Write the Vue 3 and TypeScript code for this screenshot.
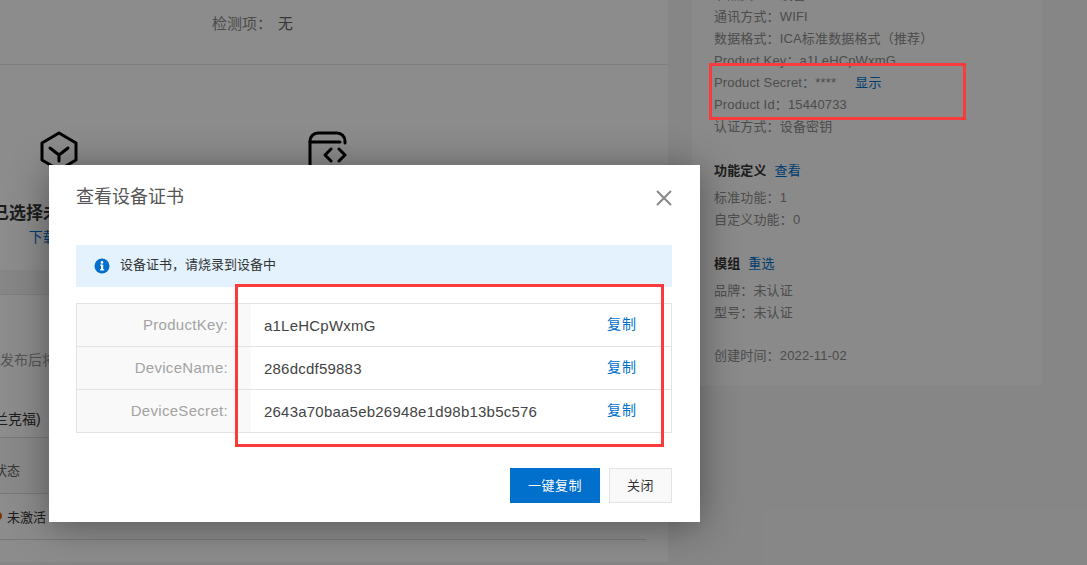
<script setup lang="ts">
interface Row { label: string; value: string }
const specs: string[] = ['通讯方式：WIFI', '数据格式：ICA标准数据格式（推荐）', 'Product Key：a1LeHCpWxmG']
const rows: Row[] = [
  { label: 'ProductKey', value: 'a1LeHCpWxmG' },
  { label: 'DeviceName', value: '286dcdf59883' },
  { label: 'DeviceSecret', value: '2643a70baa5eb26948e1d98b13b5c576' },
]
</script>

<template>
  <div class="screen">
    <div class="page">
      <main class="main">
        <div class="main-inner">
          <div class="check"><span class="check-label">检测项：</span><span class="check-value">无</span></div>
          <div class="choices">
            <div class="choice">
              <svg class="choice-icon" viewBox="0 0 40 40" fill="none" stroke="#000" stroke-width="3" stroke-linejoin="round" stroke-linecap="round">
                <path d="M20 2 37 12V29L20 39 3 29V12Z" />
                <path d="M11 17 20 24 29 17M20 24V30" />
              </svg>
              <div class="choice-title">已选择未认证模组</div>
              <div class="choice-link">下载 SDK</div>
            </div>
            <div class="choice">
              <svg class="choice-icon" viewBox="0 0 40 40" fill="none" stroke="#000" stroke-width="3" stroke-linejoin="round" stroke-linecap="round">
                <path d="M3 38V10a8 8 0 0 1 8-8H30a8 8 0 0 1 8 8V12" />
                <path d="M3 11H33M24 18 18 24 24 30M32 18 38 24 32 30" />
              </svg>
            </div>
          </div>
          <div class="band"></div>
          <div class="publish">
            <div class="publish-note">线发布后将</div>
            <div class="region">法兰克福)</div>
          </div>
          <div class="status-head">状态</div>
          <div class="status-row"><span class="dot"></span><span>未激活</span></div>
        </div>
      </main>
      <aside class="side">
        <p class="line clipped">节点类型：设备</p>
        <p v-for="s in specs" :key="s" class="line">{{ s }}</p>
        <p class="line">Product Secret：<span class="stars">****</span><a class="link show">显示</a></p>
        <p class="line">Product Id：15440733</p>
        <p class="line">认证方式：设备密钥</p>
        <h4 class="head">功能定义<a class="link">查看</a></h4>
        <p class="line">标准功能：1</p>
        <p class="line">自定义功能：0</p>
        <h4 class="head">模组<a class="link">重选</a></h4>
        <p class="line">品牌：未认证</p>
        <p class="line">型号：未认证</p>
        <p class="line created">创建时间：2022-11-02</p>
      </aside>
    </div>

    <div class="mask"></div>

    <section class="modal">
      <header class="modal-head">
        <h3 class="modal-title">查看设备证书</h3>
        <svg class="close" viewBox="0 0 16 16" fill="none" stroke="#888" stroke-width="2"><path d="M1 1 15 15M15 1 1 15" /></svg>
      </header>
      <div class="alert">
        <svg class="info" viewBox="0 0 16 16"><circle cx="8" cy="8" r="7.5" fill="#0070cc" /><rect x="7" y="6.6" width="2.2" height="5.6" fill="#fff" /><rect x="6" y="11.2" width="4.2" height="1.2" fill="#fff" /><rect x="6" y="6.6" width="2" height="1" fill="#fff" /><circle cx="8" cy="4.4" r="1.3" fill="#fff" /></svg>
        <span class="alert-text">设备证书，请烧录到设备中</span>
      </div>
      <div class="table">
        <div v-for="r in rows" :key="r.label" class="row">
          <div class="cell-label">{{ r.label }}:</div>
          <div class="cell-value">{{ r.value }}</div>
          <a class="copy">复制</a>
        </div>
      </div>
      <footer class="foot">
        <button class="btn primary">一键复制</button>
        <button class="btn">关闭</button>
      </footer>
    </section>

    <div class="mark mark-side"></div>
    <div class="mark mark-table"></div>
  </div>
</template>

<style>
html, body { margin: 0; padding: 0; }
</style>

<style scoped>
.screen {
  position: relative;
  width: 1087px;
  height: 565px;
  overflow: hidden;
  background: #f5f5f5;
  font-family: "Liberation Sans", "Noto Sans CJK SC", sans-serif;
  color: #333;
}
.page { display: flex; align-items: flex-start; gap: 24px; margin-top: -16px; }
.main { width: 668px; height: 578px; background: #fff; flex: none; overflow: hidden; }
.main-inner { width: 646px; height: 555px; border-bottom: 1px solid #ddd; box-sizing: content-box; }
.check { height: 81px; border-bottom: 1px solid #e6e6e6; box-sizing: border-box; padding: 29px 0 0 212px; font-size: 15px; line-height: 22px; color: #888; width: 668px; }
.check-value { color: #666; margin-left: 6px; }
.choices { display: flex; margin-left: -75px; height: 205px; box-sizing: border-box; padding-top: 66px; width: 743px; }
.choice { width: 268px; display: flex; flex-direction: column; align-items: center; flex: none; }
.choice-icon { width: 40px; height: 40px; display: block; }
.choice-title { margin-top: 30px; margin-left: 2px; font-size: 17px; line-height: 26px; font-weight: 700; white-space: nowrap; color: #333; }
.choice-link { margin-top: -1px; font-size: 14px; line-height: 22px; color: #0070cc; white-space: nowrap; }
.band { height: 24px; width: 668px; background: #f5f5f5; }
.publish { height: 144px; border-top: 1px solid #e6e6e6; border-bottom: 1px solid #ddd; box-sizing: border-box; overflow: hidden; }
.publish-note { margin: 54px 0 0 -14px; font-size: 14px; line-height: 22px; color: #999; white-space: nowrap; }
.region { margin: 37px 0 0 -20px; font-size: 14px; line-height: 22px; white-space: nowrap; }
.status-head { height: 56px; line-height: 66px; font-size: 13px; border-bottom: 1px solid #ddd; box-sizing: border-box; text-indent: -6px; overflow: hidden; color: #666; background: #fafafa; }
.status-row { height: 45px; display: flex; align-items: center; gap: 5px; font-size: 13px; margin-left: -6px; padding-bottom: 1px; box-sizing: border-box; }
.dot { width: 8px; height: 8px; border-radius: 50%; background: #e8590c; flex: none; }
.side {
  width: 350px;
  flex: none;
  box-sizing: border-box;
  height: 403px;
  padding: 0 22px;
  background: #fbfbfb;
  border-bottom: 1px solid #f0f0f0;
  font-size: 13px;
  letter-spacing: .15px;
}
.line { margin: 0; height: 22px; line-height: 22px; color: #8c8c8c; white-space: nowrap; }
.clipped { height: 22px; }
.stars { margin-right: 19px; }
.head { margin: 22px 0 0; height: 22px; line-height: 22px; font-size: 13px; font-weight: 700; color: #333; }
.head + .line { margin-top: 5px; }
.link { color: #0070cc; margin-left: 8px; font-weight: 400; }
.show { margin-left: 0; letter-spacing: .5px; }
.created { margin-top: 21px; }
.mask { position: absolute; inset: 0; background: rgba(0, 0, 0, .45); }
.modal {
  position: absolute;
  left: 49px;
  top: 165px;
  width: 651px;
  height: 357px;
  box-sizing: border-box;
  padding: 0 28px 0 27px;
  background: #fff;
  box-shadow: 0 4px 36px rgba(0, 0, 0, .4);
  display: flex;
  flex-direction: column;
}
.modal-head { height: 80px; display: flex; justify-content: space-between; align-items: flex-start; padding-top: 19px; box-sizing: border-box; flex: none; }
.modal-title { margin: 0; font-size: 18px; line-height: 26px; font-weight: 400; color: #555; }
.close { width: 16px; height: 16px; margin: 6px 0 0; }
.alert { height: 42px; flex: none; background: #e3f2fd; display: flex; align-items: center; gap: 10px; padding-left: 18px; font-size: 13px; color: #333; }
.alert-text { margin-bottom: 5px; }
.info { width: 16px; height: 16px; flex: none; }
.table { margin-top: 16px; border: 1px solid #e3e3e3; border-bottom: 0; flex: none; }
.row { height: 43px; display: flex; align-items: center; border-bottom: 1px solid #e3e3e3; box-sizing: border-box; font-size: 15px; }
.cell-label { width: 174px; height: 100%; box-sizing: border-box; background: #f9f9f9; text-align: right; padding-right: 23px; line-height: 42px; color: #a3a3a3; letter-spacing: .3px; flex: none; }
.cell-value { flex: 1; padding-left: 13px; color: #444; letter-spacing: .22px; }
.copy { color: #0070cc; margin: 0 34px 2px 0; letter-spacing: 1px; font-size: 14px; line-height: 20px; }
.foot { display: flex; justify-content: flex-end; gap: 9px; margin-top: 35px; }
.btn { height: 35px; width: 63px; box-sizing: border-box; padding: 0; border: 1px solid #e3e3e3; background: #f9f9f9; font: 13px/1 "Liberation Sans", "Noto Sans CJK SC", sans-serif; letter-spacing: .5px; color: #333; }
.primary { width: 90px; border: 0; background: #0070cc; color: #fff; }
.mark { position: absolute; box-sizing: border-box; border: 3px solid #f93b3b; }
.mark-side { left: 709px; top: 63px; width: 257px; height: 57px; }
.mark-table { left: 235px; top: 284px; width: 429px; height: 163px; }
</style>
